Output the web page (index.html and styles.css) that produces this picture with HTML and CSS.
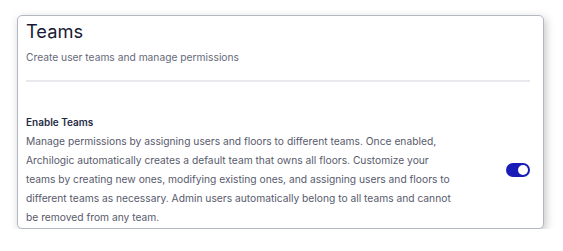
FILE: index.html
```html
<!DOCTYPE html>
<html>
<head>
<meta charset="utf-8">
<link rel="stylesheet" href="styles.css">
</head>
<body>
<div class="card">
  <div class="header">
    <h1 class="title">Teams</h1>
    <p class="subtitle">Create user teams and manage permissions</p>
  </div>
  <div class="divider"></div>
  <div class="setting">
    <div class="setting-text">
      <div class="setting-label">Enable Teams</div>
      <p class="setting-desc">Manage permissions by assigning users and floors to different teams. Once enabled, Archilogic automatically creates a default team that owns all floors. Customize your teams by creating new ones, modifying existing ones, and assigning users and floors to different teams as necessary. Admin users automatically belong to all teams and cannot be removed from any team.</p>
    </div>
    <div class="toggle"><span class="knob"></span></div>
  </div>
</div>
</body>
</html>
```

FILE: styles.css
```css
html, body {
  margin: 0;
  padding: 0;
  background: #ffffff;
}
body {
  font-family: Inter, "Noto Sans", sans-serif;
  padding: 15px 0 0 17px;
}
.card {
  box-sizing: content-box;
  width: 504px;
  height: 209px;
  padding: 3px 13px 0 8px;
  border: 1px solid #b3b7c2;
  border-radius: 5px;
  box-shadow: 2px 3px 8px rgba(40, 45, 60, 0.28);
  background: #fff;
}
.title {
  margin: 0;
  font-size: 18.25px;
  font-weight: 400;
  line-height: 24px;
  color: #181b33;
}
.subtitle {
  margin: 5px 0 0;
  font-size: 10.25px;
  line-height: 19px;
  color: #656979;
}
.divider {
  margin-top: 13px;
  height: 2px;
  background: #e8e9ed;
}
.setting {
  margin-top: 31px;
  display: flex;
  align-items: center;
  justify-content: space-between;
}
.setting-text {
  width: 433px;
}
.setting-label {
  font-size: 10px;
  font-weight: 600;
  line-height: 19px;
  color: #262a45;
}
.setting-desc {
  margin: 0;
  font-size: 10.25px;
  line-height: 19px;
  color: #575a6c;
}
.toggle {
  width: 24px;
  height: 14px;
  border-radius: 7px;
  background: #1a1cb8;
  display: flex;
  align-items: center;
  justify-content: flex-end;
  padding: 0 2px;
  box-sizing: border-box;
}
.knob {
  width: 10px;
  height: 10px;
  border-radius: 50%;
  background: #fff;
}
```
